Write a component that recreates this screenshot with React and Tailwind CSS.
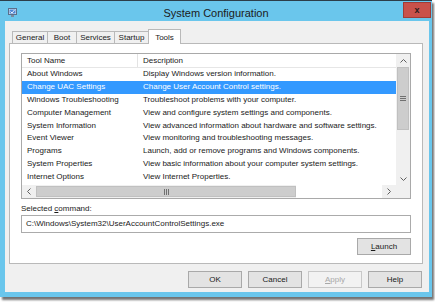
import React from 'react';

const TOOLS = [
  ['About Windows', 'Display Windows version information.'],
  ['Change UAC Settings', 'Change User Account Control settings.'],
  ['Windows Troubleshooting', 'Troubleshoot problems with your computer.'],
  ['Computer Management', 'View and configure system settings and components.'],
  ['System Information', 'View advanced information about hardware and software settings.'],
  ['Event Viewer', 'View monitoring and troubleshooting messages.'],
  ['Programs', 'Launch, add or remove programs and Windows components.'],
  ['System Properties', 'View basic information about your computer system settings.'],
  ['Internet Options', 'View Internet Properties.'],
];

const TABS = [
  { label: 'General', w: 'w-[36px]' },
  { label: 'Boot', w: 'w-[30px]' },
  { label: 'Services', w: 'w-[39px]' },
  { label: 'Startup', w: 'w-[35px]' },
];

const font = { fontFamily: '"Liberation Sans", Arial, sans-serif' };

const Button = ({ children, disabled }) => (
  <button
    className={`w-[54px] h-[17px] text-[8px] border flex items-center justify-center ${
      disabled ? 'bg-[#f2f2f2] border-[#c8c8c8] text-[#a8a8a8]' : 'bg-[#e3e3e3] border-[#a9a9a9] text-[#1a1a1a]'
    }`}
  >
    {children}
  </button>
);

export default function App() {
  return (
    <div className="w-[435px] h-[302px] bg-white overflow-hidden" style={font}>
      <div className="w-[432px] h-[297px] bg-[#6ac6ec] border-t border-[#2c3e4a] flex flex-col shadow-[2px_3px_2px_rgba(0,0,0,0.55)]">
        {/* Title bar */}
        <div className="h-[20px] relative flex items-center justify-center shrink-0">
          <svg className="absolute left-[8px] top-[7px]" width="9" height="9" viewBox="0 0 9 9">
            <rect x="0.5" y="0.5" width="8" height="6" fill="#dfe8f4" stroke="#5a6f8c" />
            <rect x="1.5" y="1.5" width="6" height="4" fill="#4d86d6" />
            <path d="M2.5 3.5 L4 5 L6.5 2" stroke="#ffffff" strokeWidth="0.9" fill="none" />
            <rect x="3" y="7" width="3" height="2" fill="#7a8aa0" />
          </svg>
          <span className="text-[11px] text-[#1b1b1b] mt-[5px]">System Configuration</span>
          <div className="absolute right-[1px] top-[1px] w-[28px] h-[16px] bg-[#c9514a] border border-[#a13c36] flex items-center justify-center">
            <span className="text-[9px] font-bold text-[#2a1a1a] leading-none">x</span>
          </div>
        </div>

        {/* Client area */}
        <div className="ml-[5px] mr-[3px] h-[271px] bg-[#f0f0f0] flex flex-col">
          {/* Tabs */}
          <div className="flex items-end h-[22px] pl-[7px] pt-[8px] shrink-0">
            {TABS.map((t) => (
              <div
                key={t.label}
                className={`${t.w} h-[12px] border border-b-0 border-[#b9b9b9] -ml-px first:ml-0 bg-[#f0f0f0] text-[8px] text-[#1a1a1a] flex items-center justify-center`}
              >
                {t.label}
              </div>
            ))}
            <div className="w-[33px] h-[15px] border border-b-0 border-[#b9b9b9] -ml-px bg-white text-[8px] text-[#1a1a1a] flex justify-center pt-[2px] relative top-px z-10">
              Tools
            </div>
          </div>

          {/* Tab panel */}
          <div className="ml-[4px] mr-[6px] h-[221px] bg-white border border-[#b9b9b9] flex flex-col px-[11px] pt-[9px] shrink-0">
            {/* List view */}
            <div className="h-[146px] border border-[#a9a9a9] flex flex-col shrink-0">
              <div className="flex flex-1 min-h-0">
                <div className="flex-1 flex flex-col min-w-0">
                  <div className="h-[14px] flex text-[8px] text-[#1a1a1a] border-b border-[#e6e6e6] shrink-0">
                    <div className="w-[116px] pl-[5px] flex items-center border-r border-[#e3e3e3]">Tool Name</div>
                    <div className="pl-[5px] flex items-center">Description</div>
                  </div>
                  {TOOLS.map(([name, desc], i) => (
                    <div
                      key={name}
                      className={`h-[12.8px] flex items-center text-[8px] whitespace-nowrap ${
                        i === 1 ? 'bg-[#3399ff] text-white' : 'text-[#1a1a1a]'
                      }`}
                    >
                      <div className="w-[116px] pl-[5px] shrink-0">{name}</div>
                      <div className="pl-[5px]">{desc}</div>
                    </div>
                  ))}
                </div>
                {/* vertical scrollbar */}
                <div className="w-[14px] bg-[#f0f0f0] flex flex-col shrink-0">
                  <div className="h-[13px] flex items-center justify-center text-[#606060]">
                    <svg width="7" height="4" viewBox="0 0 7 4"><path d="M0.5 3.5 L3.5 0.5 L6.5 3.5" stroke="#606060" fill="none" /></svg>
                  </div>
                  <div className="h-[63px] mx-[1px] bg-[#cdcdcd] border border-[#c0c0c0] flex items-center justify-center">
                    <svg width="6" height="5" viewBox="0 0 6 5">
                      <path d="M0 0.5 H6 M0 2.5 H6 M0 4.5 H6" stroke="#707070" />
                    </svg>
                  </div>
                  <div className="flex-1" />
                  <div className="h-[13px] flex items-center justify-center">
                    <svg width="7" height="4" viewBox="0 0 7 4"><path d="M0.5 0.5 L3.5 3.5 L6.5 0.5" stroke="#606060" fill="none" /></svg>
                  </div>
                </div>
              </div>
              {/* horizontal scrollbar */}
              <div className="h-[13px] flex bg-[#f0f0f0] shrink-0">
                <div className="w-[14px] flex items-center justify-center">
                  <svg width="4" height="7" viewBox="0 0 4 7"><path d="M3.5 0.5 L0.5 3.5 L3.5 6.5" stroke="#606060" fill="none" /></svg>
                </div>
                <div className="w-[260px] my-[1px] bg-[#cdcdcd] border border-[#c0c0c0] flex items-center justify-center">
                  <svg width="5" height="6" viewBox="0 0 5 6">
                    <path d="M0.5 0 V6 M2.5 0 V6 M4.5 0 V6" stroke="#707070" />
                  </svg>
                </div>
                <div className="flex-1 bg-white" />
                <div className="w-[14px] flex items-center justify-center">
                  <svg width="4" height="7" viewBox="0 0 4 7"><path d="M0.5 0.5 L3.5 3.5 L0.5 6.5" stroke="#606060" fill="none" /></svg>
                </div>
                <div className="w-[14px] bg-[#f0f0f0]" />
              </div>
            </div>

            <div className="text-[8px] text-[#1a1a1a] mt-[4px] h-[12px] flex items-center">
              Selected&nbsp;<span className="underline">c</span>ommand:
            </div>
            <div className="h-[18px] border border-[#ababab] bg-white text-[8px] text-[#1a1a1a] flex items-center pl-[4px]">
              C:\Windows\System32\UserAccountControlSettings.exe
            </div>
            <div className="flex justify-end mt-[5px]">
              <Button>
                <span className="underline">L</span>aunch
              </Button>
            </div>
          </div>

          {/* Dialog buttons */}
          <div className="flex justify-end gap-[6px] mt-[7px] mr-[7px]">
            <Button>OK</Button>
            <Button>Cancel</Button>
            <Button disabled>
              <span className="underline">A</span>pply
            </Button>
            <Button>Help</Button>
          </div>
        </div>
      </div>
    </div>
  );
}
